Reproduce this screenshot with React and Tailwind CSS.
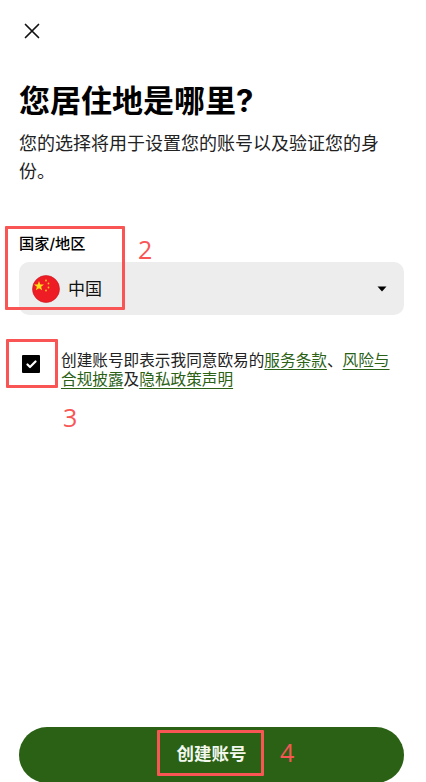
const cjk = "font-['Inter','Noto_Sans_CJK_SC',sans-serif]";

function Flag() {
  return (
    <svg width="28" height="28" viewBox="0 0 28 28" className="shrink-0">
      <circle cx="14" cy="14" r="13.5" fill="#ee1c25" stroke="#c8151c" strokeWidth="0.6" />
      <polygon points="7,6 8.3,9.4 12,9.5 9.1,11.8 10.1,15.3 7,13.3 3.9,15.3 4.9,11.8 2,9.5 5.7,9.4" fill="#ffe01a" />
      <circle cx="14" cy="5.5" r="0.9" fill="#ffc61a" />
      <circle cx="16.5" cy="8.5" r="0.9" fill="#ffc61a" />
      <circle cx="16.5" cy="12.5" r="0.9" fill="#ffc61a" />
      <circle cx="14" cy="15.5" r="0.9" fill="#ffc61a" />
    </svg>
  );
}

function Link({ children }) {
  return <a className="text-[#2a6115] underline underline-offset-[3px] [text-decoration-skip-ink:none]">{children}</a>;
}

export default function App() {
  return (
    <div className={`relative h-[782px] w-[426px] overflow-hidden bg-white text-black ${cjk}`}>
      <div className="flex h-full flex-col px-[19px]">
        <button className="mt-[23px] ml-[5px] flex h-4 w-4 items-center justify-center">
          <svg width="16" height="16" viewBox="0 0 16 16" fill="none" stroke="#111" strokeWidth="1.7" strokeLinecap="round">
            <path d="M1.5 1.5 14.5 14.5M14.5 1.5 1.5 14.5" />
          </svg>
        </button>
        <h1 className="mt-[39px] text-[31px] leading-[46px] font-bold">您居住地是哪里?</h1>
        <p className="mt-[6px] w-[370px] text-[18px] leading-[28px] text-[#222]">您的选择将用于设置您的账号以及验证您的身份。</p>

        <label className="mt-[47px] text-[15.2px] leading-[22px] font-medium">国家/地区</label>
        <div className="mt-[7px] flex h-[53px] w-[385px] items-center rounded-[10px] bg-[#ededed] pr-[17px] pl-[13px]">
          <Flag />
          <span className="ml-[8px] text-[17px] leading-[24px] text-[#111]">中国</span>
          <svg width="10" height="6" viewBox="0 0 10 6" className="ml-auto">
            <path d="M0.5 0.5h9L5 5.5z" fill="#000" />
          </svg>
        </div>

        <div className="mt-[36px] flex">
          <div className="mt-[4px] ml-[3px] flex h-[18px] w-[18px] shrink-0 items-center justify-center rounded-[1px] bg-black">
            <svg width="11" height="9" viewBox="0 0 11 9" fill="none" stroke="#fff" strokeWidth="2.2" strokeLinecap="round" strokeLinejoin="round">
              <path d="M1.5 4.5 4 7l5.5-5.5" />
            </svg>
          </div>
          <p className="ml-[21px] w-[335px] text-[15.65px] leading-[19px] text-[#222]">
            创建账号即表示我同意欧易的<Link>服务条款</Link>、<Link>风险与合规披露</Link>及<Link>隐私政策声明</Link>
          </p>
        </div>

        <button className="mt-auto -mb-[1px] h-[56px] w-[385px] rounded-[28px] bg-[#2a6115] pb-[1px] text-[17.5px] font-bold text-[#f2f7ee]">创建账号</button>
      </div>

      <div className="absolute top-[226px] left-[5px] h-[84px] w-[120px] rounded-[1px] border-[3px] border-[#f95555]" />
      <div className="absolute top-[339px] left-[6px] h-[49px] w-[52px] rounded-[1px] border-[3px] border-[#f95555]" />
      <div className="absolute top-[730px] left-[157px] h-[46px] w-[107px] rounded-[1px] border-[3px] border-[#f95555]" />
      <span className="absolute top-[233px] left-[138px] font-['Open_Sans',sans-serif] text-[25px] leading-[32px] text-[#f95555]">2</span>
      <span className="absolute top-[401px] left-[63px] font-['Open_Sans',sans-serif] text-[25px] leading-[32px] text-[#f95555]">3</span>
      <span className="absolute top-[736px] left-[280px] font-['Open_Sans',sans-serif] text-[25px] leading-[32px] text-[#f95555]">4</span>
    </div>
  );
}
